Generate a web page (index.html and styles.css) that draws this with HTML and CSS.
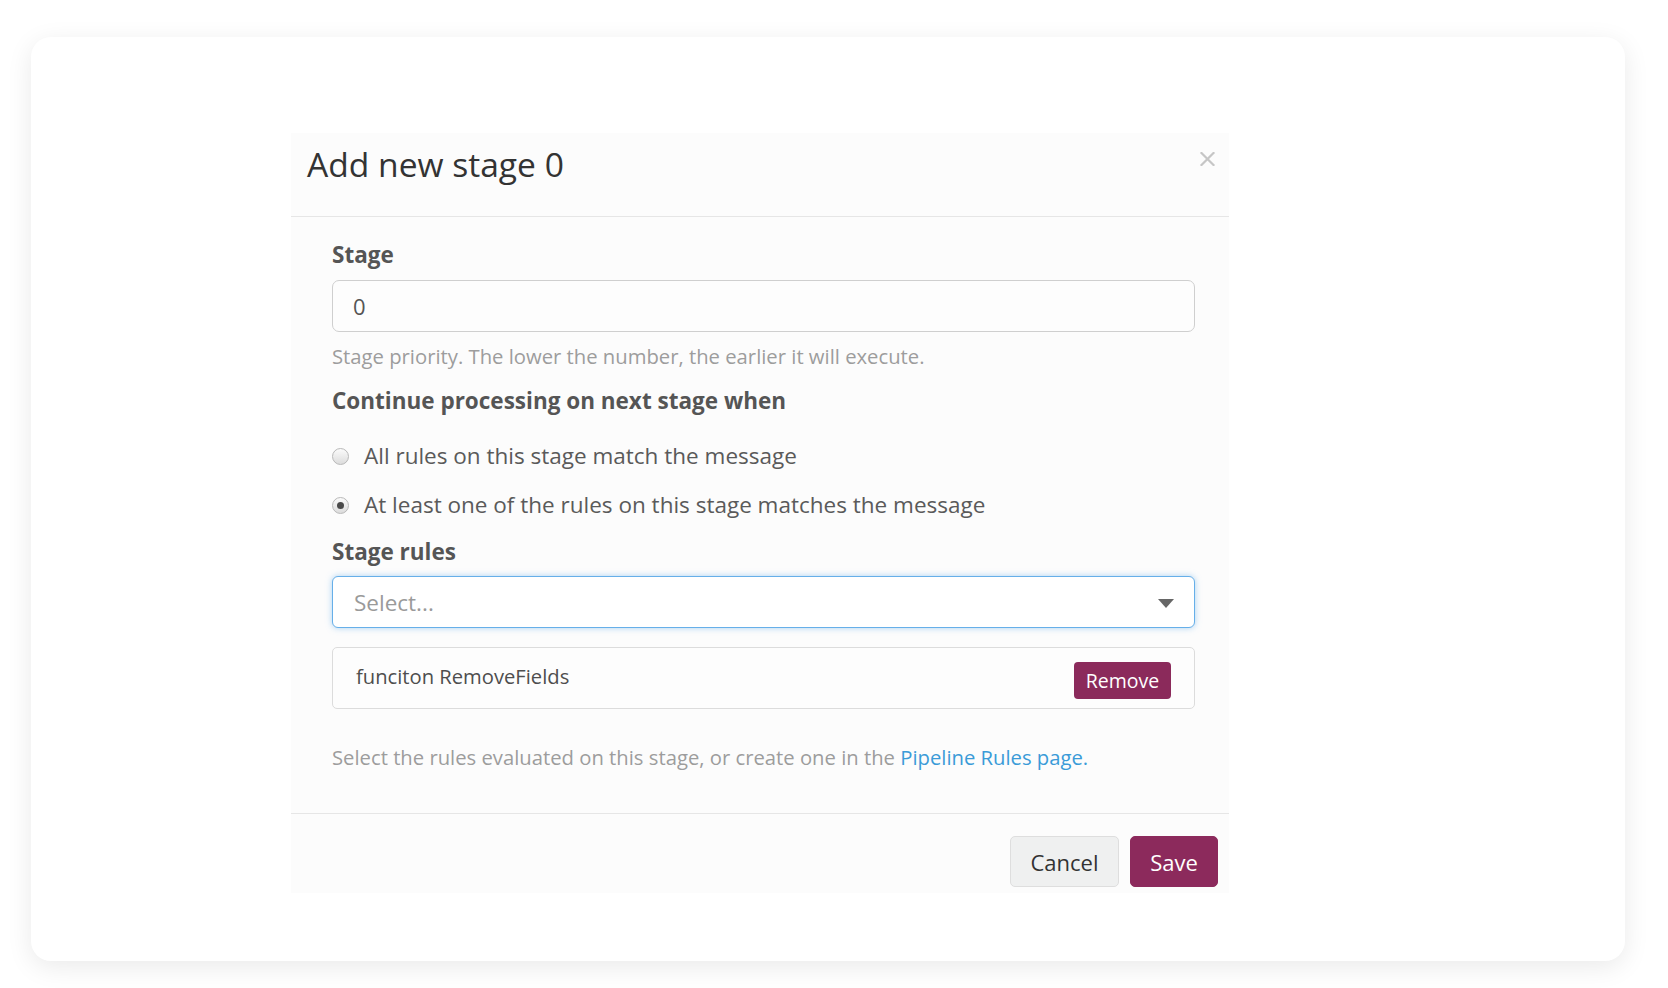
FILE: index.html
```html
<!DOCTYPE html>
<html lang="en">
<head>
<meta charset="utf-8">
<title>Add new stage 0</title>
<link rel="stylesheet" href="styles.css">
</head>
<body>
<div class="page">
  <div class="card">
    <div class="modal">
      <div class="modal-header">
        <h4 class="modal-title">Add new stage 0</h4>
        <button class="close" type="button" aria-label="Close">
          <svg width="17" height="14" viewBox="0 0 17 14"><path d="M2.5 1 L14.5 13 M14.5 1 L2.5 13" stroke="#c6c6c6" stroke-width="2.2" stroke-linecap="square" fill="none"/></svg>
        </button>
      </div>
      <div class="modal-body">
        <label class="label">Stage</label>
        <div class="input">0</div>
        <div class="help">Stage priority. The lower the number, the earlier it will execute.</div>

        <div class="label label-section">Continue processing on next stage when</div>
        <div class="radio-row first">
          <span class="radio"></span>
          <span class="radio-text">All rules on this stage match the message</span>
        </div>
        <div class="radio-row">
          <span class="radio checked"></span>
          <span class="radio-text">At least one of the rules on this stage matches the message</span>
        </div>

        <div class="label label-rules">Stage rules</div>
        <div class="select">
          <span class="placeholder">Select...</span>
          <span class="caret"></span>
        </div>
        <div class="rule-box">
          <span class="rule-name">funciton RemoveFields</span>
          <button class="btn-remove" type="button">Remove</button>
        </div>
        <div class="help help-rules">Select the rules evaluated on this stage, or create one in the <a class="link" href="#">Pipeline Rules page.</a></div>
      </div>
      <div class="modal-footer">
        <button class="btn btn-cancel" type="button">Cancel</button>
        <button class="btn btn-save" type="button">Save</button>
      </div>
    </div>
  </div>
</div>
</body>
</html>
```

FILE: styles.css
```css
* { box-sizing: border-box; }

html, body {
  margin: 0;
  padding: 0;
  background: #ffffff;
}

body {
  font-family: "Open Sans", "Noto Sans", "DejaVu Sans", sans-serif;
  color: #555;
}

.page {
  width: 1668px;
  height: 988px;
  padding: 37px 43px 27px 31px;
}

.card {
  width: 1594px;
  height: 924px;
  background: #ffffff;
  border-radius: 20px;
  box-shadow: 0 6px 26px rgba(0, 0, 0, 0.085);
  padding: 96px 0 0 260px;
}

.modal {
  width: 938px;
  background: #fcfcfc;
}

.modal-header {
  height: 84px;
  border-bottom: 1px solid #e6e6e6;
  display: flex;
  justify-content: space-between;
  align-items: flex-start;
  padding: 0 13px 0 16px;
}

.modal-title {
  margin: 0;
  padding-top: 9px;
  font-size: 33.6px;
  line-height: 45px;
  font-weight: 400;
  color: #333;
}

.close {
  margin-top: 19px;
  padding: 0;
  border: 0;
  background: none;
  width: 17px;
  height: 14px;
  display: block;
}
.close svg { display: block; }

.modal-body {
  padding: 22px 34px 41px 41px;
}

.label {
  display: block;
  font-size: 22.5px;
  line-height: 32px;
  font-weight: 700;
  color: #555;
}

.input {
  margin-top: 9px;
  height: 52px;
  border: 1px solid #cfcfcf;
  border-radius: 7px;
  background: #fdfdfd;
  padding-left: 20px;
  font-size: 22px;
  line-height: 50px;
  color: #555;
}

.help {
  margin-top: 9px;
  font-size: 20.25px;
  line-height: 30px;
  color: #9d9d9d;
}

.label-section { margin-top: 14px; }

.radio-row {
  display: flex;
  align-items: center;
  height: 32px;
  margin-top: 17px;
}
.radio-row.first { margin-top: 23px; }

.radio {
  width: 17px;
  height: 17px;
  border-radius: 50%;
  border: 1px solid #b9b9b9;
  background: linear-gradient(#fbfbfb, #dcdcdc);
  margin-right: 15px;
  flex: none;
  display: flex;
  align-items: center;
  justify-content: center;
}
.radio.checked::after {
  content: "";
  width: 7px;
  height: 7px;
  border-radius: 50%;
  background: #4a4a4a;
}

.radio-text {
  font-size: 22.5px;
  line-height: 32px;
  color: #5a5a5a;
}

.label-rules { margin-top: 15px; }

.select {
  margin-top: 8px;
  height: 52px;
  border: 1px solid #66afe9;
  border-radius: 6px;
  background: #fff;
  box-shadow: 0 0 6px rgba(102, 175, 233, 0.55);
  display: flex;
  align-items: center;
  justify-content: space-between;
  padding: 0 20px 0 21px;
}

.placeholder {
  font-size: 22.5px;
  color: #9a9a9a;
}

.caret {
  width: 0;
  height: 0;
  border-left: 8px solid transparent;
  border-right: 8px solid transparent;
  border-top: 9px solid #666;
  margin-top: 2px;
}

.rule-box {
  margin-top: 19px;
  height: 62px;
  border: 1px solid #dcdcdc;
  border-radius: 5px;
  background: #fdfdfd;
  display: flex;
  align-items: center;
  justify-content: space-between;
  padding: 4px 23px 0 23px;
}

.rule-name {
  font-size: 20.2px;
  color: #4e4e4e;
  margin-top: -8px;
}

.btn-remove {
  height: 37px;
  width: 97px;
  padding: 0;
  border: 0;
  border-radius: 4px;
  background: #8b2a5b;
  color: #fff;
  font-family: inherit;
  font-size: 19.5px;
}

.help-rules {
  margin-top: 33px;
}

.link {
  color: #3a9bd8;
  text-decoration: none;
}

.modal-footer {
  display: flex;
  justify-content: flex-end;
  gap: 11px;
  border-top: 1px solid #e6e6e6;
  padding: 22px 11px 6px 0;
}

.btn {
  height: 51px;
  border-radius: 5px;
  font-family: inherit;
  font-size: 22px;
  padding: 0;
}

.btn-cancel {
  width: 109px;
  background: #eff0f0;
  border: 1px solid #dedede;
  color: #333;
}

.btn-save {
  width: 88px;
  background: #8c2a5c;
  border: 1px solid #8c2a5c;
  color: #fff;
}
```
